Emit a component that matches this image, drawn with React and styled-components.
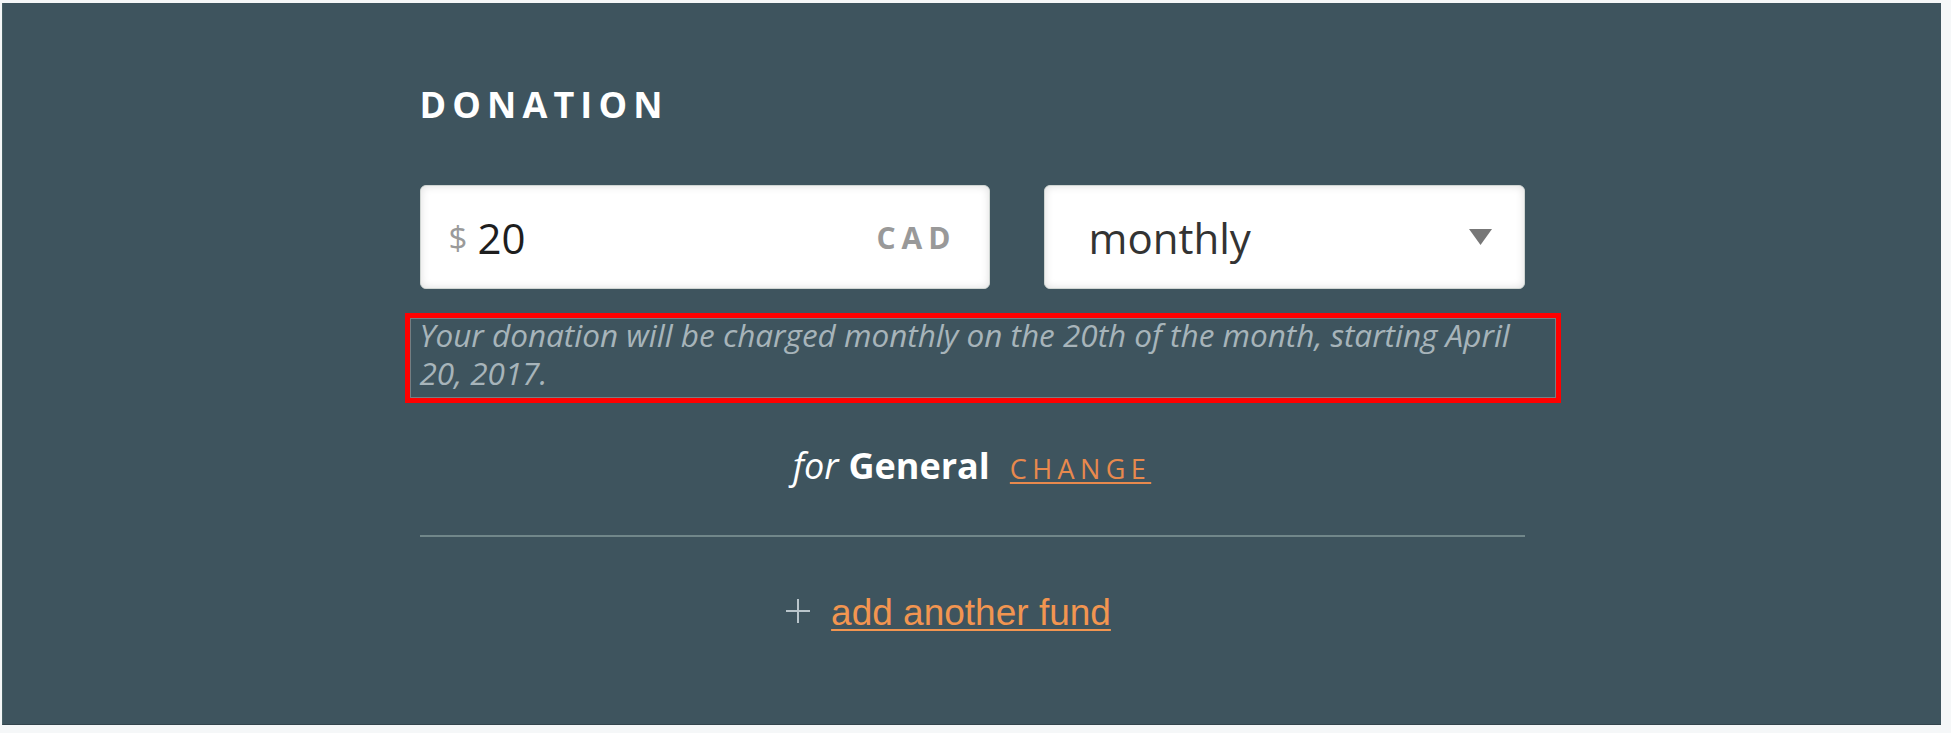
import React from "react";
import styled, { createGlobalStyle } from "styled-components";

const GlobalStyle = createGlobalStyle`
  html, body {
    margin: 0;
    padding: 0;
    background: #f5f7f8;
  }
  body {
    font-family: "Open Sans", "Liberation Sans", sans-serif;
  }
`;

const Panel = styled.section`
  box-sizing: border-box;
  width: 1939px;
  height: 722px;
  margin: 3px 0 0 2px;
  background: #3e545e;
  border-left: 1px solid #4a6368;
  border-bottom: 1px solid #33454d;
  display: flex;
  justify-content: center;
`;

const Form = styled.div`
  width: 1105px;
  padding-top: 80px;
  display: flex;
  flex-direction: column;
`;

const Heading = styled.h2`
  margin: 0;
  font-size: 36px;
  line-height: 44px;
  font-weight: 700;
  letter-spacing: 0.17em;
  color: #fff;
`;

const Fields = styled.div`
  margin-top: 58px;
  display: flex;
  gap: 54px;
`;

const Box = styled.div`
  box-sizing: border-box;
  flex: ${(p) => p.$grow};
  height: 104px;
  border: 1px solid #cfd5d2;
  border-radius: 6px;
  background: #fff;
  box-shadow: inset 0 0 9px rgba(0, 0, 0, 0.13);
  display: flex;
  align-items: center;
  padding: 0 32px 0 ${(p) => p.$padLeft}px;
`;

const Dollar = styled.span`
  font-size: 33px;
  color: #9a9a9a;
  margin-right: 10px;
`;

const Amount = styled.span`
  font-size: 42px;
  color: #1e1e1e;
  flex: 1;
`;

const Currency = styled.span`
  font-size: 30px;
  font-weight: 700;
  letter-spacing: 0.2em;
  color: #999;
`;

const Frequency = styled.span`
  font-size: 42px;
  color: #333;
  flex: 1;
`;

const Caret = styled.svg`
  width: 23px;
  height: 16px;
  fill: #777;
`;

const Hint = styled.p`
  position: relative;
  margin: 27px 0 0;
  font-size: 31.5px;
  line-height: 38px;
  font-style: italic;
  color: #a7b4ba;

  &::after {
    content: "";
    position: absolute;
    top: -3px;
    bottom: -11px;
    left: -15px;
    right: -36px;
    border: 5px solid #f00;
    box-shadow: inset 0 0 0 1px rgba(160, 160, 160, 0.55);
  }
`;

const FundRow = styled.div`
  margin-top: 52px;
  display: flex;
  justify-content: center;
  align-items: baseline;
  font-size: 36px;
  line-height: 44px;
  color: #fff;
`;

const For = styled.em`
  font-style: italic;
  margin-right: 10px;
`;

const FundName = styled.strong`
  font-weight: 700;
`;

const ChangeLink = styled.a`
  margin-left: 20px;
  font-size: 27px;
  letter-spacing: 0.2em;
  color: #e8894d;
  text-decoration: underline;
  text-decoration-thickness: 2px;
  text-underline-offset: 3px;
  cursor: pointer;
`;

const Divider = styled.hr`
  margin: 44px 0 0;
  border: 0;
  height: 2px;
  background: #71878a;
`;

const AddRow = styled.div`
  margin-top: 54px;
  padding-right: 48px;
  display: flex;
  justify-content: center;
  align-items: center;
  gap: 20px;
  font-family: "Liberation Sans", Arial, sans-serif;
  font-size: 37px;
  line-height: 44px;
`;

const PlusIcon = styled.svg`
  width: 26px;
  height: 26px;
  stroke: #b9c5cb;
  stroke-width: 2;
  margin-bottom: 4px;
`;

const AddLink = styled.a`
  color: #f29550;
  text-decoration: underline;
  text-decoration-thickness: 2px;
  text-underline-offset: 4px;
  cursor: pointer;
`;

export default function App() {
  return (
    <>
      <GlobalStyle />
      <Panel>
        <Form>
          <Heading>DONATION</Heading>
          <Fields>
            <Box $grow="0 0 570px" $padLeft={28}>
              <Dollar>$</Dollar>
              <Amount>20</Amount>
              <Currency>CAD</Currency>
            </Box>
            <Box $grow="1" $padLeft={44}>
              <Frequency>monthly</Frequency>
              <Caret viewBox="0 0 23 16">
                <polygon points="0,0 23,0 11.5,16" />
              </Caret>
            </Box>
          </Fields>
          <Hint>
            Your donation will be charged monthly on the 20th of the month,
            starting April 20, 2017.
          </Hint>
          <FundRow>
            <For>for</For>
            <FundName>General</FundName>
            <ChangeLink>CHANGE</ChangeLink>
          </FundRow>
          <Divider />
          <AddRow>
            <PlusIcon viewBox="0 0 26 26">
              <line x1="13" y1="1" x2="13" y2="25" />
              <line x1="1" y1="13" x2="25" y2="13" />
            </PlusIcon>
            <AddLink>add another fund</AddLink>
          </AddRow>
        </Form>
      </Panel>
    </>
  );
}
